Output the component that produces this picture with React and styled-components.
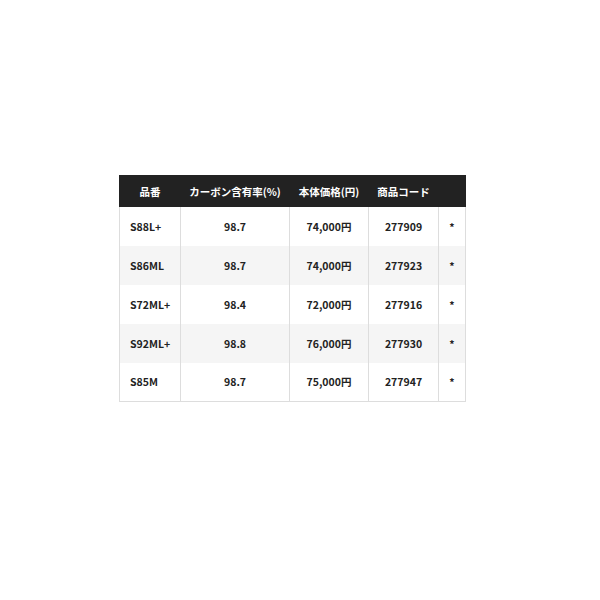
import React from 'react';
import styled, { createGlobalStyle } from 'styled-components';

const GlobalStyle = createGlobalStyle`
  html, body {
    margin: 0;
    padding: 0;
    background: #fff;
  }
  body {
    font-family: "Noto Sans CJK JP", "Noto Sans", sans-serif;
  }
`;

const Page = styled.div`
  width: 600px;
  height: 600px;
  padding: 175px 0 0 119px;
  box-sizing: border-box;
`;

const Table = styled.table`
  border-collapse: collapse;
  width: 346px;
  table-layout: fixed;
  font-size: 10.5px;
  font-weight: 700;
  color: #222;
`;

const HeadCell = styled.th`
  background: #222;
  color: #fff;
  height: 31px;
  padding: 0;
  font-weight: 700;
  text-align: center;
  border: 1px solid #222;
  box-sizing: border-box;
`;

const Row = styled.tr`
  background: ${(p) => (p.$shaded ? '#f5f5f5' : '#fff')};
`;

const Cell = styled.td`
  height: 39px;
  padding: 0 ${(p) => (p.$left ? '10px' : '0')};
  text-align: ${(p) => (p.$left ? 'left' : 'center')};
  border-left: 1px solid #ddd;
  border-right: 1px solid #ddd;
  box-sizing: border-box;
  ${(p) => (p.$last ? 'border-bottom: 1px solid #ddd;' : '')}
`;

const rows = [
  { name: 'S88L+', carbon: '98.7', price: '74,000円', code: '277909' },
  { name: 'S86ML', carbon: '98.7', price: '74,000円', code: '277923' },
  { name: 'S72ML+', carbon: '98.4', price: '72,000円', code: '277916' },
  { name: 'S92ML+', carbon: '98.8', price: '76,000円', code: '277930' },
  { name: 'S85M', carbon: '98.7', price: '75,000円', code: '277947' },
];

const widths = [61, 109, 79, 70, 27];

export default function App() {
  return (
    <>
      <GlobalStyle />
      <Page>
        <Table>
          <colgroup>
            {widths.map((w, i) => (
              <col key={i} style={{ width: w }} />
            ))}
          </colgroup>
          <thead>
            <tr>
              <HeadCell>品番</HeadCell>
              <HeadCell>カーボン含有率(%)</HeadCell>
              <HeadCell>本体価格(円)</HeadCell>
              <HeadCell>商品コード</HeadCell>
              <HeadCell></HeadCell>
            </tr>
          </thead>
          <tbody>
            {rows.map((r, i) => {
              const last = i === rows.length - 1;
              return (
                <Row key={r.code} $shaded={i % 2 === 1}>
                  <Cell $left $last={last}>{r.name}</Cell>
                  <Cell $last={last}>{r.carbon}</Cell>
                  <Cell $last={last}>{r.price}</Cell>
                  <Cell $last={last}>{r.code}</Cell>
                  <Cell $last={last}>*</Cell>
                </Row>
              );
            })}
          </tbody>
        </Table>
      </Page>
    </>
  );
}
